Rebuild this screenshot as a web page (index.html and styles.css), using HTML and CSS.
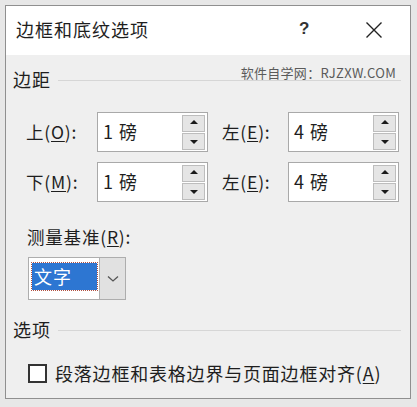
FILE: index.html
```html
<!DOCTYPE html>
<html lang="zh">
<head>
<meta charset="utf-8">
<link rel="stylesheet" href="styles.css">
</head>
<body>
<div class="dialog">
  <div class="titlebar">
    <span class="title">边框和底纹选项</span>
    <span class="help">?</span>
    <span class="close">
      <svg width="18" height="18" viewBox="0 0 18 18"><path d="M1.5 1.5 L16.5 16.5 M16.5 1.5 L1.5 16.5" stroke="#222" stroke-width="1.4" fill="none"/></svg>
    </span>
  </div>
  <div class="body">
    <div class="watermark">软件自学网：RJZXW.COM</div>
    <div class="group-head first"><span>边距</span><i></i></div>
    <div class="grid">
      <label class="lbl">上(<u>O</u>):</label>
      <div class="spin"><span class="val">1 磅</span><div class="btns"><b class="up"></b><b class="down"></b></div></div>
      <label class="lbl lbl2">左(<u>E</u>):</label>
      <div class="spin"><span class="val">4 磅</span><div class="btns"><b class="up"></b><b class="down"></b></div></div>
      <label class="lbl">下(<u>M</u>):</label>
      <div class="spin"><span class="val">1 磅</span><div class="btns"><b class="up"></b><b class="down"></b></div></div>
      <label class="lbl lbl2">左(<u>E</u>):</label>
      <div class="spin"><span class="val">4 磅</span><div class="btns"><b class="up"></b><b class="down"></b></div></div>
    </div>
    <div class="measure">测量基准(<u>R</u>):</div>
    <div class="combo">
      <div class="combo-text"><span class="sel">文字</span></div>
      <div class="combo-btn">
        <svg width="12" height="8" viewBox="0 0 12 8"><path d="M1 1.5 L6 6 L11 1.5" stroke="#555" stroke-width="1.3" fill="none"/></svg>
      </div>
    </div>
    <div class="group-head second"><span>选项</span><i></i></div>
    <div class="check-row">
      <span class="box"></span>
      <span class="check-text">段落边框和表格边界与页面边框对齐(<u>A</u>)</span>
    </div>
  </div>
</div>
</body>
</html>
```
FILE: styles.css
```css
html, body {
  margin: 0;
  padding: 0;
}
body {
  background: #e7e7e7;
  width: 417px;
  height: 407px;
  font-family: "Noto Sans CJK SC", "Noto Sans", sans-serif;
  color: #1e1e1e;
  padding-top: 5px;
  padding-left: 5px;
  box-sizing: border-box;
}
.dialog {
  width: 406px;
  height: 394px;
  box-sizing: border-box;
  border: 1px solid #8f8f8f;
  background: #efefef;
  display: flex;
  flex-direction: column;
}
.titlebar {
  height: 49px;
  background: #fff;
  display: flex;
  align-items: center;
  padding-left: 10px;
}
.title {
  font-size: 18px;
  letter-spacing: 1px;
  flex: 1;
  line-height: 1;
  margin-top: -3px;
}
.help {
  font-family: "Liberation Sans", sans-serif;
  font-weight: bold;
  font-size: 17px;
  width: 20px;
  margin-right: 46px;
  margin-top: -3px;
  color: #333;
}
.close {
  width: 18px;
  height: 18px;
  margin-right: 27px;
  margin-top: -4px;
}
.body {
  position: relative;
  flex: 1;
  padding: 0 9px 0 7px;
}
.watermark {
  position: absolute;
  right: 14px;
  top: 8px;
  font-size: 13px;
  color: #5a5a5a;
  letter-spacing: 0.3px;
}
.group-head {
  display: flex;
  align-items: center;
  font-size: 18px;
  line-height: 18px;
  letter-spacing: 1px;
}
.group-head i {
  flex: 1;
  height: 1px;
  background: #d6d6d6;
  margin-left: 7px;
  margin-top: 2px;
}
.group-head.first {
  margin-top: 15px;
}
.group-head.second {
  margin-top: 20px;
}
.grid {
  display: grid;
  grid-template-columns: 71px 111px 80px 111px;
  row-gap: 10px;
  margin-top: 24px;
  padding-left: 13px;
  align-items: center;
}
.lbl {
  font-size: 17.5px;
  letter-spacing: 0.8px;
  margin-top: -2px;
}
.lbl2 {
  padding-left: 14px;
}
.spin {
  height: 40px;
  box-sizing: border-box;
  border: 1px solid #a9a9a9;
  background: #fff;
  display: flex;
  align-items: center;
  justify-content: space-between;
  padding-left: 5px;
  padding-right: 2px;
}
.val {
  font-size: 18px;
  letter-spacing: 1px;
  margin-top: -3px;
}
.btns {
  display: flex;
  flex-direction: column;
  gap: 1px;
  width: 23px;
  height: 35px;
}
.btns b {
  flex: 1;
  background: #e5e5e5;
  border: 1px solid #bdbdbd;
  position: relative;
}
.btns b::after {
  content: "";
  position: absolute;
  left: 50%;
  top: 50%;
  margin-left: -4px;
  border-left: 4px solid transparent;
  border-right: 4px solid transparent;
}
.btns .up::after {
  border-bottom: 4px solid #1a1a1a;
  margin-top: -3px;
}
.btns .down::after {
  border-top: 4px solid #1a1a1a;
  margin-top: -1px;
}
.measure {
  font-size: 17.5px;
  letter-spacing: 0.8px;
  line-height: 18px;
  margin-top: 26px;
  padding-left: 14px;
}
.combo {
  margin-top: 11px;
  margin-left: 15px;
  width: 98px;
  height: 43px;
  box-sizing: border-box;
  border: 1px solid #adadad;
  display: flex;
}
.combo-text {
  width: 70px;
  background: #fff;
  padding: 5px 2px 9px 3px;
  box-sizing: border-box;
  display: flex;
}
.sel {
  flex: 1;
  background: #2d76d2;
  color: #fff;
  font-size: 18px;
  letter-spacing: 1px;
  line-height: 27px;
  padding-left: 2px;
  outline: 1px dotted #b05040;
}
.combo-btn {
  flex: 1;
  background: #e1e1e1;
  border-left: 1px solid #b0b0b0;
  display: flex;
  align-items: center;
  justify-content: center;
}
.check-row {
  display: flex;
  align-items: center;
  margin-top: 26px;
  padding-left: 15px;
}
.box {
  width: 19px;
  height: 19px;
  box-sizing: border-box;
  border: 2px solid #333;
  background: #fff;
  margin-right: 8px;
}
.check-text {
  font-size: 18px;
  letter-spacing: 0.8px;
  line-height: 1;
  margin-top: -2px;
}
u {
  text-underline-offset: 2px;
}
```
